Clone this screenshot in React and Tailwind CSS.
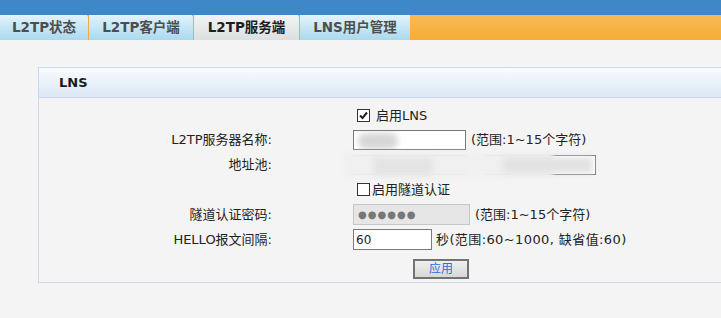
const FONT = "font-['DejaVu_Sans','Noto_Sans_CJK_SC',sans-serif]";

const tabs = [
  { label: 'L2TP状态', w: 'w-[89px]', sep: true },
  { label: 'L2TP客户端', w: 'w-[105px]', sep: true },
  { label: 'L2TP服务端', w: 'w-[106px]', sep: true, active: true },
  { label: 'LNS用户管理', w: 'w-[110px]', sep: false },
];

const Check = ({ checked }) => (
  <span className="w-[13px] h-[13px] border border-[#333] bg-white flex items-center justify-center">
    {checked && (
      <svg width="11" height="11" viewBox="0 0 11 11">
        <path d="M2 5.5 L4.5 8 L9 2.5" fill="none" stroke="#222" strokeWidth="2" />
      </svg>
    )}
  </span>
);

const Blur = ({ className }) => (
  <div className={`absolute bg-[#d6d6d6] blur-[3px] ${className}`} />
);

const Row = ({ label, h = 'h-[25px]', children }) => (
  <div className={`flex items-center ${h}`}>
    <div className="w-[233px] text-right text-[13px] text-[#222]">{label}</div>
    <div className="ml-[81px] flex items-center text-[13px] text-[#222]">{children}</div>
  </div>
);

export default function App() {
  return (
    <div className={`w-[721px] h-[318px] bg-[#f4f4f4] overflow-hidden ${FONT}`}>
      <div className="h-[15px] bg-[#3f88c8]" />
      <div className="h-[25px] flex">
        {tabs.map((t) => (
          <div
            key={t.label}
            className={`relative ${t.w} h-full flex items-center justify-center text-[13.5px] font-bold ${
              t.sep ? 'border-r border-[#f5a83c]' : ''
            } ${
              t.active
                ? 'bg-gradient-to-b from-[#f2f3f4] to-[#dcdfe1] text-[#1e1e1e]'
                : 'bg-gradient-to-b from-[#e2f3fb] to-[#aad9ee] text-[#4e4e4e]'
            }`}
          >
            {t.label}
            {t.sep && (
              <span className="absolute -right-[3px] top-0 w-0 h-0 border-l-[2.5px] border-r-[2.5px] border-t-[4px] border-l-transparent border-r-transparent border-t-[#f5a83c]" />
            )}
          </div>
        ))}
        <div className="flex-1 h-full bg-gradient-to-b from-[#f8b955] to-[#f6ad37]" />
      </div>

      <div className="mt-[27px] ml-[38px] w-[700px] border border-[#c8dbee]">
        <div className="h-[30px] flex items-center pl-[20px] bg-gradient-to-b from-[#f9fbfe] to-[#dce8f5] border-b border-[#c8dbee]">
          <span className="text-[13px] font-bold text-[#1a1a1a]">LNS</span>
        </div>
        <div className="pt-[6px] pb-[3px]">
          <Row label="" h="h-[23px]">
            <span className="ml-[4px] flex items-center gap-[6px]">
              <Check checked />
              启用LNS
            </span>
          </Row>
          <Row label="L2TP服务器名称:">
            <div className="relative w-[113px] h-[20px] border border-[#7a7a7a] bg-white overflow-hidden">
              <Blur className="left-[4px] top-[2px] w-[40px] h-[16px] rounded-full" />
            </div>
            <span className="ml-[5px]">(范围:1~15个字符)</span>
          </Row>
          <Row label="地址池:">
            <div className="relative flex items-center">
              <div className="w-[113px] h-[20px] border border-[#7a7a7a] bg-white" />
              <div className="w-[17px]" />
              <div className="w-[113px] h-[20px] border border-[#7a7a7a] bg-white" />
              <div className="absolute -left-[10px] top-[-3px] w-[210px] h-[26px] bg-[#f0f0f0] blur-[2px]" />
              <Blur className="left-[20px] top-[2px] w-[60px] h-[18px] bg-[#e4e4e4]" />
              <Blur className="left-[150px] top-[2px] w-[90px] h-[16px] bg-[#e2e2e2]" />
            </div>
          </Row>
          <Row label="">
            <span className="ml-[4px] flex items-center gap-[2px]">
              <Check />
              启用隧道认证
            </span>
          </Row>
          <Row label="隧道认证密码:">
            <div className="w-[117px] h-[21px] border border-[#c6c6c6] bg-[#e6e6e6] flex items-center pl-[4px] text-[10px] tracking-[1px] text-[#777]">
              ●●●●●●
            </div>
            <span className="ml-[5px]">(范围:1~15个字符)</span>
          </Row>
          <Row label="HELLO报文间隔:">
            <div className="w-[79px] h-[21px] border border-[#7a7a7a] bg-white flex items-center pl-[2px] text-[12px]">
              60
            </div>
            <span className="ml-[4px] tracking-[0.4px]">秒(范围:60~1000, 缺省值:60)</span>
          </Row>
          <div className="flex mt-[7px]">
            <button className="ml-[374px] w-[56px] h-[20px] border-2 border-[#737373] bg-gradient-to-b from-[#f0f0f0] to-[#d8d8d8] text-[12px] text-[#2a6fe0] flex items-center justify-center">
              应用
            </button>
          </div>
        </div>
      </div>
    </div>
  );
}
